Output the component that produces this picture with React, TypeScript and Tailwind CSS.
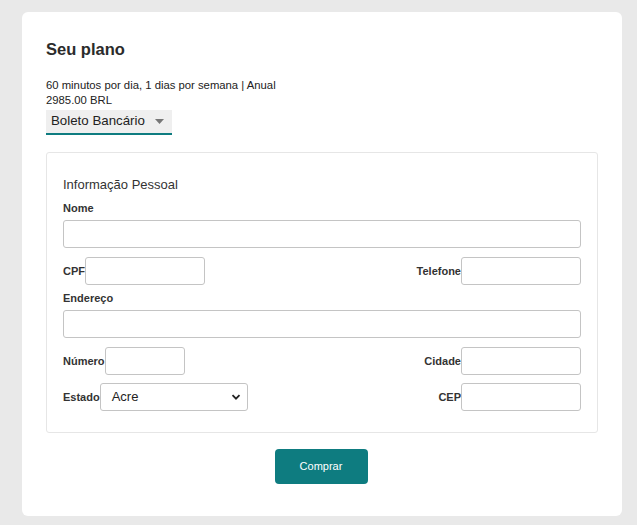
import React from 'react'

const font = { fontFamily: '"Liberation Sans", Arial, sans-serif' }

function Field({ label, width, select }: { label: string; width: string; select?: boolean }) {
  return (
    <div className='flex items-center'>
      <span className='text-[11px] font-bold leading-[14px] text-[#333]'>{label}</span>
      {select ? (
        <div className={`${width} h-[28px] flex items-center justify-between border border-[#c4c4c4] rounded-[3px] bg-white pl-[11px] pr-[6px]`}>
          <span className='text-[13px] text-[#222]'>Acre</span>
          <svg width='10' height='10' viewBox='0 0 10 10'>
            <path d='M1.5 3.2 L5 6.7 L8.5 3.2' stroke='#222' strokeWidth='1.8' fill='none' />
          </svg>
        </div>
      ) : (
        <input className={`${width} h-[28px] border border-[#c4c4c4] rounded-[3px] bg-white outline-none`} />
      )}
    </div>
  )
}

export default function App() {
  return (
    <div className='min-h-[525px] bg-[#e9e9e9] pt-[12px] pl-[22px]' style={font}>
      <div className='w-[600px] h-[504px] bg-white rounded-[6px] pt-[27px] px-[24px]'>
        <h2 className='text-[16.5px] font-bold leading-[20px] text-[#2b2b2b]'>Seu plano</h2>

        <div className='mt-[19px] text-[11.3px] leading-[15px] text-[#222]'>
          <p>60 minutos por dia, 1 dias por semana | Anual</p>
          <p>2985.00 BRL</p>
        </div>

        {/* forma de pagamento */}
        <div className='mt-[1.5px] w-[126px] h-[25px] bg-[#efefef] border-b-2 border-[#0e7c80] flex items-center justify-between pl-[5px] pr-[8px]'>
          <span className='text-[13.3px] text-[#222]'>Boleto Bancário</span>
          <svg width='9' height='5' viewBox='0 0 9 5'>
            <path d='M0 0 L9 0 L4.5 5 Z' fill='#777' />
          </svg>
        </div>

        <div className='mt-[17px] h-[281px] border border-[#e6e6e6] rounded-[3px] pt-[24px] px-[16px]'>
          <p className='text-[13px] leading-[16px] text-[#333]'>Informação Pessoal</p>

          <p className='mt-[8px] text-[11px] font-bold leading-[14px] text-[#333]'>Nome</p>
          <input className='mt-[5px] w-full h-[28px] border border-[#c4c4c4] rounded-[3px] outline-none block' />

          <div className='mt-[9px] flex justify-between'>
            <Field label='CPF' width='w-[120px]' />
            <Field label='Telefone' width='w-[120px]' />
          </div>

          <p className='mt-[6px] text-[11px] font-bold leading-[14px] text-[#333]'>Endereço</p>
          <input className='mt-[5px] w-full h-[28px] border border-[#c4c4c4] rounded-[3px] outline-none block' />

          <div className='mt-[9px] flex justify-between'>
            <Field label='Número' width='w-[80px]' />
            <Field label='Cidade' width='w-[120px]' />
          </div>

          <div className='mt-[8px] flex justify-between'>
            <Field label='Estado' width='w-[148px]' select />
            <Field label='CEP' width='w-[120px]' />
          </div>
        </div>

        <div className='mt-[16px] flex justify-center'>
          <button className='-ml-[2px] w-[93px] h-[35px] bg-[#0e7c80] rounded-[4px] text-white text-[11px]'>Comprar</button>
        </div>
      </div>
    </div>
  )
}
